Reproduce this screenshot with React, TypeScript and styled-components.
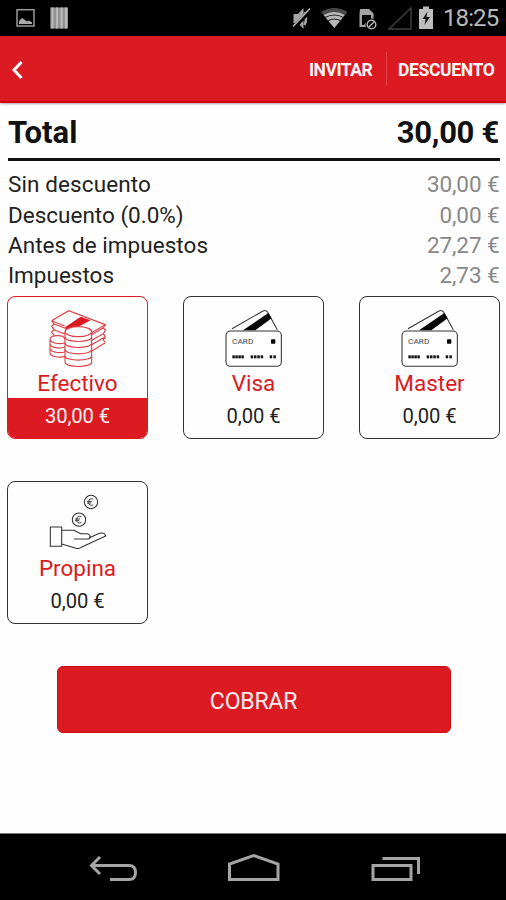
import React from "react";
import styled, { createGlobalStyle } from "styled-components";

const RED = "#db1a21";

const GlobalStyle = createGlobalStyle`
  * { box-sizing: border-box; }
  body { margin: 0; background: #fff; font-family: Roboto, "Liberation Sans", sans-serif; }
`;

const Screen = styled.div`
  width: 506px;
  height: 900px;
  display: flex;
  flex-direction: column;
  background: #fefefe;
  overflow: hidden;
`;

const StatusBar = styled.div`
  height: 36px;
  flex: none;
  display: flex;
  justify-content: space-between;
  background: #000;
`;

const Clock = styled.div`
  width: 63px;
  font-size: 24px;
  line-height: 37px;
  letter-spacing: -0.9px;
  color: #b9b9b9;
  white-space: nowrap;
`;

const StatusRight = styled.div`
  display: flex;
`;

const ActionBar = styled.header`
  height: 67px;
  flex: none;
  display: flex;
  align-items: center;
  background: ${RED};
  border-bottom: 2px solid #d5040b;
  box-shadow: 0 1px 2px rgba(90, 60, 60, 0.45);
`;

const BackButton = styled.button`
  width: 40px;
  height: 40px;
  padding: 0;
  border: 0;
  background: none;
  margin-right: auto;
`;

const Action = styled.button<{ $width: number; $spacing: number }>`
  width: ${(p) => p.$width}px;
  padding: 3px 0 0;
  border: 0;
  background: none;
  color: #fff5f4;
  font: bold 17.5px Roboto, sans-serif;
  letter-spacing: ${(p) => p.$spacing}px;
  white-space: nowrap;
  text-align: left;
`;

const ActionDivider = styled.div`
  width: 1px;
  height: 34px;
  margin: 1px 11px 0 14px;
  background: #e54047;
`;

const Content = styled.main`
  flex: 1;
  padding: 0 6px 0 8px;
`;

const TotalRow = styled.div`
  height: 58px;
  display: flex;
  justify-content: space-between;
  border-bottom: 3px solid #111;
  font-size: 31px;
  font-weight: 700;
  line-height: 59px;
  color: #111;
`;

const TotalAmount = styled.span`
  margin-right: 1px;
  letter-spacing: -0.3px;
`;

const Summary = styled.dl`
  margin: 8.4px 0 0;
`;

const SummaryRow = styled.div`
  height: 30.3px;
  display: flex;
  justify-content: space-between;
  font-size: 22.5px;
  line-height: 31px;
`;

const Label = styled.dt<{ $spacing: number }>`
  color: #222;
  letter-spacing: ${(p) => p.$spacing}px;
`;

const Amount = styled.dd`
  margin: 0 0.5px 0 0;
  color: #888;
  letter-spacing: -0.1px;
`;

const Tiles = styled.div`
  display: grid;
  grid-template-columns: repeat(3, 141px);
  grid-auto-rows: 143px;
  justify-content: space-between;
  row-gap: 42px;
  margin: 5px 0 0 -1px;
`;

const Tile = styled.div<{ $selected?: boolean }>`
  display: flex;
  flex-direction: column;
  align-items: center;
  padding-top: 11px;
  border: 1.4px solid ${(p) => (p.$selected ? RED : "#333")};
  border-radius: 8px;
  overflow: hidden;
`;

const TileIcon = styled.svg`
  width: 60px;
  height: 60px;
  flex: none;
`;

const TileName = styled.div`
  height: 30px;
  font-size: 22.5px;
  line-height: 30px;
  color: ${RED};
`;

const TileAmount = styled.div<{ $selected?: boolean }>`
  align-self: stretch;
  flex: 1;
  text-align: center;
  font-size: 20.2px;
  line-height: 36px;
  letter-spacing: -0.1px;
  background: ${(p) => (p.$selected ? RED : "transparent")};
  color: ${(p) => (p.$selected ? "#fff0f0" : "#222")};
`;

const ChargeButton = styled.button`
  display: block;
  width: 394px;
  height: 67px;
  margin: 42px 0 0 48.5px;
  padding: 4px 0 0;
  border: 1px solid #d00a12;
  border-radius: 6px;
  background: ${RED};
  color: #fff0ef;
  font: 23px Roboto, sans-serif;
  letter-spacing: -0.2px;
`;

const NavBar = styled.nav`
  height: 67px;
  flex: none;
  display: flex;
  justify-content: center;
  background: #000;
  border-top: 1px solid #777;
`;

const StatusLeftIcons = () => (
  <svg width="90" height="36" viewBox="0 0 90 36">
    <rect x="17" y="9.7" width="17" height="16.3" fill="none" stroke="#999" strokeWidth="1.5" />
    <path d="M19 24v-3l3-3 3 2 2 1.500 2-1 3 2v1.500z" fill="#aaa" />
    <rect x="50.300" y="7.500" width="17.700" height="21" fill="#909090" />
    <path d="M52.500 7.500v21M57 7.500v21M61.600 7.500v21M66 7.500v21" stroke="#b9b9b9" strokeWidth="2.200" />
  </svg>
);

const StatusRightIcons = () => (
  <svg width="153" height="36" viewBox="290 0 153 36">
    <path d="M293.500 14h4.500l5.500-6v21l-5.500-6h-4.500z" fill="#a5a5a5" />
    <path d="M304.500 12q3 6 0 13" fill="none" stroke="#a5a5a5" strokeWidth="2.500" />
    <path d="M293 28.500L311 9.500" stroke="#000" strokeWidth="4" />
    <path d="M293 26.500L310 8.500" stroke="#b0b0b0" strokeWidth="1.700" />
    <path d="M321 12q13-8 26.500 0L334.300 28z" fill="#4b4b4b" />
    <path d="M323.700 15q10.600-6 21 0L334.300 28z" fill="#b8b8b8" />
    <path d="M325 17.500q9.500-5 18.500 0M327.500 21q7-4 13.500 0" fill="none" stroke="#222" strokeWidth="1.200" />
    <path d="M360 9h9l4.500 4.500v13.500h-14V14z" fill="#a3a3a3" />
    <path d="M362 15h9v6h-4l-3 4h-2z" fill="#050505" />
    <circle cx="371.500" cy="24.500" r="6" fill="#000" />
    <circle cx="371.500" cy="24.500" r="4.300" fill="#000" stroke="#b0b0b0" strokeWidth="1.500" />
    <path d="M368.500 27.500l6-6" stroke="#b0b0b0" strokeWidth="1.400" />
    <path d="M389 29L411 8v21z" fill="none" stroke="#3e3e3e" strokeWidth="1.500" />
    <path d="M419 9h4V6.500h6V9h4v20h-14z" fill="#bdbdbd" />
    <path d="M427.500 11.500l-5 7.500h3l-1 6 5.500-8h-3.500z" fill="#151515" />
  </svg>
);

const CashIcon = () => (
  <TileIcon viewBox="0 0 180 180" fill="none" stroke="#dd4147" strokeWidth="3.4">
    <path d="M11 38L62 8L172 50L128 76M11 38L50 54" />
    <path d="M11 38l7 10-7 7 7 10-7 7 7 10M18 48l38 14M18 65l32 13M172 50l-6 9 6 8-6 10 6 9-6 10 6 8M166 59l-35 21M166 77l-35 20M172 86l-41 24M172 104l-42 26" />
    <path d="M51 58L98 26L128 37L91 56L57 64z" fill={RED} stroke="none" />
    <path d="M51 94c-3-16-45-14-45 0v40c0 11 24 16 45 12M6 94c0 12 30 16 45 10M6 107c0 12 30 16 45 10M6 121c0 12 30 16 45 10" fill="#fff" />
    <path d="M51 71v91c0 18 80 18 80 0V71" fill="#fff" />
    <ellipse cx="91" cy="71" rx="40" ry="15" fill="#fff" />
    <path d="M51 87c0 18 80 18 80 0M51 105c0 18 80 18 80 0M51 124c0 18 80 18 80 0M51 143c0 18 80 18 80 0" />
  </TileIcon>
);

const DOTS = [27, 36, 45, 54, 82, 92, 102, 112, 139, 150];

const CardIcon = () => (
  <TileIcon viewBox="0 0 180 180">
    <path d="M24 62L117 9q9-4 14 4L160 65" fill="none" stroke="#333" strokeWidth="3.2" />
    <path d="M57 67L133 15L143 31L94 67z" fill="#080808" />
    <rect x="6" y="69" width="166" height="106" rx="13" fill="#fff" stroke="#333" strokeWidth="3.2" />
    <text x="24" y="109" fontFamily="Roboto, sans-serif" fontSize="24" fill="#444" textLength="64" lengthAdjust="spacingAndGlyphs">CARD</text>
    <rect x="141" y="94" width="13" height="13" rx="2" fill="#050505" />
    {DOTS.map((x) => (
      <rect key={x} x={x - 2} y="142" width="7.500" height="9" fill="#151515" />
    ))}
  </TileIcon>
);

const TipIcon = () => (
  <TileIcon viewBox="0 0 180 180" fill="none" stroke="#333" strokeWidth="3.2" strokeLinejoin="round">
    <rect x="7" y="102" width="34" height="58" />
    <path d="M41 112h37l20 10h20q11 3 7 12l29-13q16-4 19 8l-73 34q-7 5-16 3l-43-13" />
    <path d="M78 138h44l7-7" />
    {[[129, 27], [93, 80]].map(([x, y]) => (
      <g key={x}>
        <circle cx={x} cy={y} r="20" />
        <path d={`M${x + 7} ${y - 9}q-14-4-14 9t14 9M${x - 12} ${y - 2}h15M${x - 12} ${y + 3}h13`} strokeWidth="2.800" />
      </g>
    ))}
  </TileIcon>
);

const NavIcons = () => (
  <svg width="506" height="66" viewBox="0 834 506 66" fill="none" stroke="#a5a5a5" strokeWidth="3">
    <path d="M100 857l-8.500 8.500L100 874M92 865.500h37q6.500 0 6.500 7t-6.500 7h-19" />
    <path d="M229.500 879.500v-15.500l24-8.500 24.500 8.500v15.500z" />
    <path d="M373 865.500h38v14h-38zM382.500 858.500h36v15.500" />
  </svg>
);

const SUMMARY = [
  { label: "Sin descuento", amount: "30,00 €", spacing: 0.1 },
  { label: "Descuento (0.0%)", amount: "0,00 €", spacing: 0 },
  { label: "Antes de impuestos", amount: "27,27 €", spacing: 0.05 },
  { label: "Impuestos", amount: "2,73 €", spacing: 0 },
];

const METHODS = [
  { name: "Efectivo", amount: "30,00 €", Icon: CashIcon, selected: true },
  { name: "Visa", amount: "0,00 €", Icon: CardIcon, selected: false },
  { name: "Master", amount: "0,00 €", Icon: CardIcon, selected: false },
  { name: "Propina", amount: "0,00 €", Icon: TipIcon, selected: false },
];

export default function App() {
  return (
    <Screen>
      <GlobalStyle />
      <StatusBar>
        <StatusLeftIcons />
        <StatusRight>
          <StatusRightIcons />
          <Clock>18:25</Clock>
        </StatusRight>
      </StatusBar>
      <ActionBar>
        <BackButton aria-label="Atrás">
          <svg width="40" height="40" viewBox="0 0 40 40" fill="none" stroke="#fff" strokeWidth="3">
            <path d="M21.500 13L14 21l7.500 8" />
          </svg>
        </BackButton>
        <Action $width={63} $spacing={-0.5}>INVITAR</Action>
        <ActionDivider />
        <Action $width={108} $spacing={-0.35}>DESCUENTO</Action>
      </ActionBar>
      <Content>
        <TotalRow>
          <span>Total</span>
          <TotalAmount>30,00 €</TotalAmount>
        </TotalRow>
        <Summary>
          {SUMMARY.map((row) => (
            <SummaryRow key={row.label}>
              <Label $spacing={row.spacing}>{row.label}</Label>
              <Amount>{row.amount}</Amount>
            </SummaryRow>
          ))}
        </Summary>
        <Tiles>
          {METHODS.map(({ name, amount, Icon, selected }) => (
            <Tile key={name} $selected={selected}>
              <Icon />
              <TileName>{name}</TileName>
              <TileAmount $selected={selected}>{amount}</TileAmount>
            </Tile>
          ))}
        </Tiles>
        <ChargeButton>COBRAR</ChargeButton>
      </Content>
      <NavBar>
        <NavIcons />
      </NavBar>
    </Screen>
  );
}
